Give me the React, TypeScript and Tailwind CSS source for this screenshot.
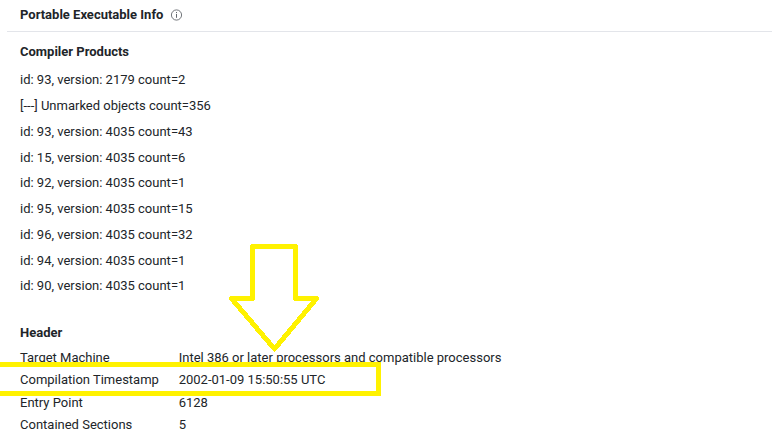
const products = [
  "id: 93, version: 2179 count=2",
  "[---] Unmarked objects count=356",
  "id: 93, version: 4035 count=43",
  "id: 15, version: 4035 count=6",
  "id: 92, version: 4035 count=1",
  "id: 95, version: 4035 count=15",
  "id: 96, version: 4035 count=32",
  "id: 94, version: 4035 count=1",
  "id: 90, version: 4035 count=1",
];

const header = [
  ["Target Machine", "Intel 386 or later processors and compatible processors"],
  ["Compilation Timestamp", "2002-01-09 15:50:55 UTC"],
  ["Entry Point", "6128"],
  ["Contained Sections", "5"],
];

function InfoIcon() {
  return (
    <svg width="12" height="12" viewBox="0 0 12 12" fill="none" className="shrink-0">
      <circle cx="6.5" cy="6" r="5.1" stroke="#51565c" strokeWidth="0.8" />
      <path d="M6.5 5V8.8" stroke="#51565c" strokeWidth="0.9" />
      <path d="M6.5 3.1V4.1" stroke="#51565c" strokeWidth="1" />
    </svg>
  );
}

export default function App() {
  return (
    <main className="relative h-[442px] w-[772px] overflow-hidden bg-white font-['Roboto',sans-serif] text-[13px] text-[#212529]">
      <div className="ml-[7px] flex h-8 items-center gap-[7px] border-b border-[#e3e5ea] pl-[13px] pb-[2px]">
        <h1 className="font-bold">Portable Executable Info</h1>
        <InfoIcon />
      </div>
      <section className="pl-5 pt-[9.3px]">
        <h2 className="h-[26px] font-bold leading-[21px]">Compiler Products</h2>
        <ul>
          {products.map((p) => (
            <li key={p} className="h-[25.75px] leading-[25.75px]">{p}</li>
          ))}
        </ul>
      </section>
      <section className="pl-5 pt-[23.85px]">
        <h2 className="h-[24px] font-bold leading-[20px]">Header</h2>
        <dl>
          {header.map(([k, v]) => (
            <div key={k} className="flex h-[22.4px] leading-[22.4px]">
              <dt className="w-[158.7px] shrink-0">{k}</dt>
              <dd className="whitespace-nowrap">{v}</dd>
            </div>
          ))}
        </dl>
      </section>
      <div className="absolute -left-[5px] top-[362px] h-[34px] w-[386px] border-[5px] border-[#fff200]" />
      <svg className="absolute left-[225px] top-[240px]" width="100" height="116" viewBox="225 240 100 116" fill="none">
        <path
          d="M252.5 246.5H295.5V298.5H316.5L274.5 349L231.5 298.5H252.5Z"
          stroke="#fff200"
          strokeWidth="5"
          strokeLinejoin="round"
          shapeRendering="crispEdges"
        />
      </svg>
    </main>
  );
}
